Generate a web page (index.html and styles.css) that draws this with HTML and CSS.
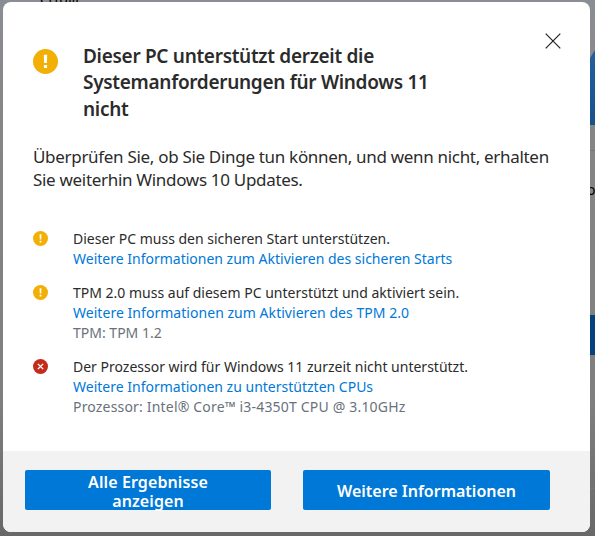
FILE: index.html
```html
<!DOCTYPE html>
<html lang="de">

<head>
    <meta charset="UTF-8">
    <meta name="viewport" content="width=device-width, initial-scale=1.0">
    <title>PC-Integritätsprüfung</title>
    <link rel="stylesheet" href="styles.css">
</head>

<body>
    <!-- Dimmed page behind the dialog -->
    <div class="backdrop">
        <span class="backdrop-title">erfüllt</span>
        <div class="backdrop-image"></div>
        <div class="backdrop-line"></div>
        <span class="backdrop-text">o</span>
        <div class="backdrop-button"></div>
        <div class="backdrop-line backdrop-line-bottom"></div>
    </div>

    <div class="dialog">
        <div class="content">
            <div class="header">
                <svg class="header-icon" viewBox="0 0 16 16">
                    <circle cx="8" cy="8" r="8" fill="#f2af05" />
                    <path d="M6.9 3.7h2.2L8.9 9H7.1zM7 10.3h2v1.9H7z" fill="#fff" />
                </svg>
                <h1>
                    <span>Dieser PC unterstützt derzeit die</span>
                    <span>Systemanforderungen für Windows 11</span>
                    <span>nicht</span>
                </h1>
                <button class="close" aria-label="Schließen">
                    <svg viewBox="0 0 16 16">
                        <path d="M.7.7l14.6 14.6M15.3.7L.7 15.3" stroke="#222" stroke-width="1.2" fill="none" />
                    </svg>
                </button>
            </div>

            <p class="intro">
                <span>Überprüfen Sie, ob Sie Dinge tun können, und wenn nicht, erhalten</span>
                <span>Sie weiterhin Windows 10 Updates.</span>
            </p>

            <ul class="checks">
                <li>
                    <svg class="check-icon" viewBox="0 0 16 16">
                        <circle cx="8" cy="8" r="8" fill="#f2af05" />
                        <path d="M7 3.5h2L8.8 9H7.2zM7.1 10.3h1.8v2H7.1z" fill="#fff" />
                    </svg>
                    <div class="check-text">
                        <span>Dieser PC muss den sicheren Start unterstützen.</span>
                        <a href="#">Weitere Informationen zum Aktivieren des sicheren Starts</a>
                    </div>
                </li>
                <li>
                    <svg class="check-icon" viewBox="0 0 16 16">
                        <circle cx="8" cy="8" r="8" fill="#f2af05" />
                        <path d="M7 3.5h2L8.8 9H7.2zM7.1 10.3h1.8v2H7.1z" fill="#fff" />
                    </svg>
                    <div class="check-text">
                        <span>TPM 2.0 muss auf diesem PC unterstützt und aktiviert sein.</span>
                        <a class="link-tpm" href="#">Weitere Informationen zum Aktivieren des TPM 2.0</a>
                        <span class="detail">TPM: TPM 1.2</span>
                    </div>
                </li>
                <li>
                    <svg class="check-icon" viewBox="0 0 16 16">
                        <circle cx="8" cy="8" r="8" fill="#c42b1c" />
                        <path d="M5.2 5.2l5.6 5.6M10.8 5.2l-5.6 5.6" stroke="#fff" stroke-width="1.5" fill="none" />
                    </svg>
                    <div class="check-text">
                        <span>Der Prozessor wird für Windows 11 zurzeit nicht unterstützt.</span>
                        <a href="#">Weitere Informationen zu unterstützten CPUs</a>
                        <span class="detail detail-cpu">Prozessor: Intel® Core™ i3-4350T CPU @ 3.10GHz</span>
                    </div>
                </li>
            </ul>
        </div>

        <div class="footer">
            <button class="btn btn-results">Alle Ergebnisse<br>anzeigen</button>
            <button class="btn btn-info">Weitere Informationen</button>
        </div>
    </div>
</body>

</html>
```
FILE: styles.css
```css
* {
    box-sizing: border-box;
}

body {
    margin: 0;
    width: 595px;
    height: 536px;
    padding: 2px 5px 4px 3px;
    overflow: hidden;
    font-family: "Noto Sans", "Open Sans", sans-serif;
    color: #2b2b2b;
    background: #7f7f7f;
}

h1,
p,
ul {
    margin: 0;
    padding: 0;
}

h1 span,
.intro span,
.check-text span,
.check-text a {
    display: block;
    white-space: nowrap;
}

/* Page behind the dialog */
.backdrop {
    position: absolute;
    top: 0;
    left: 0;
    width: 595px;
    height: 536px;
    overflow: hidden;
    background: linear-gradient(#8a8d93, #858585 25%, #7f7f7f 75%, #696767);
}

.backdrop-title {
    position: absolute;
    top: -12px;
    left: 40px;
    font-size: 15px;
    line-height: 20px;
    letter-spacing: -0.3px;
    color: #000;
}

.backdrop-image {
    position: absolute;
    top: 50px;
    right: 0;
    width: 5px;
    height: 75px;
    background: linear-gradient(#245f9c, #17528c);
    clip-path: polygon(100% 0, 100% 100%, 0 100%, 0 8px);
}

.backdrop-line {
    position: absolute;
    top: 150px;
    right: 0;
    width: 10px;
    height: 1px;
    background: #777;
}

.backdrop-line-bottom {
    top: 488px;
}

.backdrop-text {
    position: absolute;
    top: 180px;
    left: 587px;
    font-size: 14px;
    line-height: 20px;
    color: #000;
}

.backdrop-button {
    position: absolute;
    top: 315px;
    right: 0;
    width: 10px;
    height: 40px;
    background: #05427c;
}

/* Dialog */
.dialog {
    position: relative;
    display: flex;
    flex-direction: column;
    width: 587px;
    height: 530px;
    border-radius: 8px;
    overflow: hidden;
    background: #fff;
}

.content {
    flex: 1;
    padding: 0 30px;
}

.header {
    display: flex;
    align-items: flex-start;
    padding-top: 41px;
}

.header-icon {
    width: 25px;
    height: 25px;
    margin-top: 6px;
    margin-right: 25px;
}

h1 {
    flex: 1;
    font-size: 19px;
    font-weight: 600;
    line-height: 26.4px;
    letter-spacing: -0.3px;
}

.close {
    width: 16px;
    height: 16px;
    margin: -10px -1px 0 0;
    padding: 0;
    border: none;
    background: none;
    cursor: pointer;
}

.close svg {
    display: block;
    width: 16px;
    height: 16px;
}

.intro {
    margin-top: 22.8px;
    font-size: 17px;
    line-height: 23px;
    letter-spacing: -0.31px;
}

.checks {
    margin-top: 38px;
    list-style: none;
    font-size: 14px;
    line-height: 20.3px;
}

.checks li {
    display: flex;
    margin-bottom: 13.2px;
}

.check-icon {
    width: 15px;
    height: 15px;
    margin-top: 2px;
    margin-right: 25px;
}

.check-text a {
    color: #0078d7;
    text-decoration: none;
}

.check-text .link-tpm {
    letter-spacing: 0.04px;
}

.check-text .detail {
    color: #69727c;
}

.check-text .detail-cpu {
    letter-spacing: 0.18px;
}

.footer {
    display: flex;
    gap: 32px;
    height: 81px;
    padding: 19px 22px;
    background: #f2f2f2;
}

.btn {
    width: 247px;
    height: 40px;
    padding: 2px 0 0;
    border: none;
    border-radius: 2px;
    background: #0078d7;
    color: #fff;
    font-family: inherit;
    font-size: 16px;
    font-weight: 600;
    line-height: 19px;
    cursor: pointer;
}

.btn-results {
    width: 246px;
    padding-top: 3px;
    letter-spacing: 0.1px;
}
```
